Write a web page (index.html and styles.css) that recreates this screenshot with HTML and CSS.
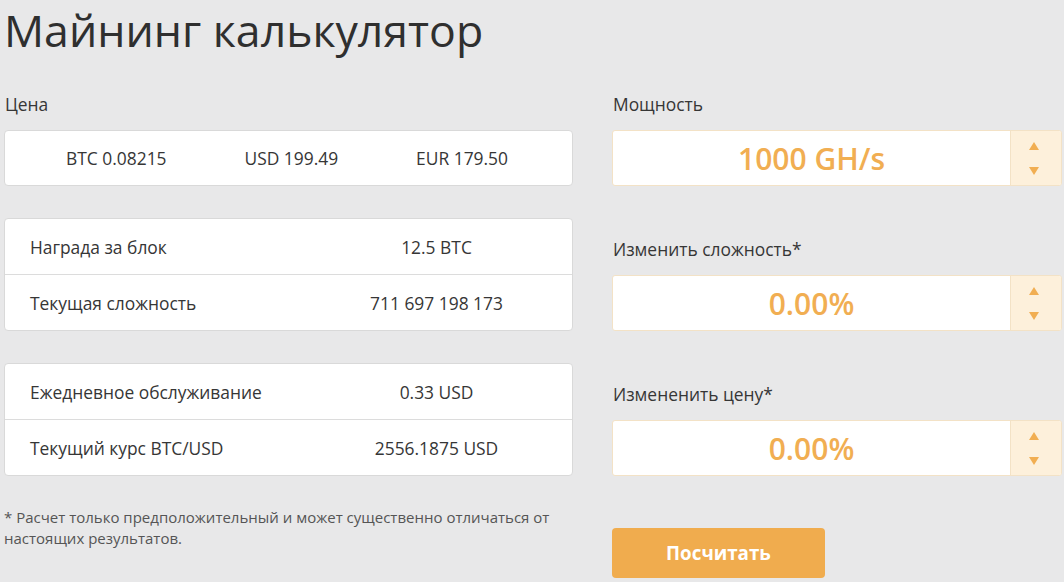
FILE: index.html
```html
<!DOCTYPE html>
<html lang="ru">
<head>
<meta charset="utf-8">
<title>Майнинг калькулятор</title>
<link rel="stylesheet" href="styles.css">
</head>
<body>
<div class="page">
  <h1 class="title">Майнинг калькулятор</h1>
  <div class="columns">
    <div class="left">
      <div class="label">Цена</div>
      <div class="box prices">
        <span>BTC 0.08215</span>
        <span>USD 199.49</span>
        <span>EUR 179.50</span>
      </div>
      <div class="box table">
        <div class="row"><span class="k">Награда за блок</span><span class="v">12.5 BTC</span></div>
        <div class="row"><span class="k">Текущая сложность</span><span class="v">711 697 198 173</span></div>
      </div>
      <div class="box table">
        <div class="row"><span class="k">Ежедневное обслуживание</span><span class="v">0.33 USD</span></div>
        <div class="row"><span class="k">Текущий курс BTC/USD</span><span class="v">2556.1875 USD</span></div>
      </div>
      <p class="note">* Расчет только предположительный и может существенно отличаться от настоящих результатов.</p>
    </div>
    <div class="right">
      <div class="label">Мощность</div>
      <div class="spin">
        <div class="spin-value">1000 GH/s</div>
        <div class="spin-btns"><span class="up"></span><span class="down"></span></div>
      </div>
      <div class="label">Изменить сложность*</div>
      <div class="spin">
        <div class="spin-value">0.00%</div>
        <div class="spin-btns"><span class="up"></span><span class="down"></span></div>
      </div>
      <div class="label">Измененить цену*</div>
      <div class="spin">
        <div class="spin-value">0.00%</div>
        <div class="spin-btns"><span class="up"></span><span class="down"></span></div>
      </div>
      <button class="btn">Посчитать</button>
    </div>
  </div>
</div>
</body>
</html>
```

FILE: styles.css
```css
html, body {
  margin: 0;
  padding: 0;
  background: #e8e8e9;
}
body {
  font-family: "Open Sans", "Liberation Sans", sans-serif;
  color: #333;
  width: 1064px;
  height: 582px;
  overflow: hidden;
}
.page {
  padding: 0 2px 0 4px;
}
.title {
  margin: 2px 0 0 0;
  font-size: 44.6px;
  font-weight: 400;
  line-height: 56px;
  color: #2f2f2f;
}
.columns {
  display: grid;
  grid-template-columns: 569px 450px;
  column-gap: 39px;
  margin-top: 35px;
}
.label {
  font-size: 17.4px;
  line-height: 22px;
  color: #363636;
  margin-bottom: 15px;
  margin-left: 1px;
}
.box {
  background: #fff;
  border: 1px solid #d9d9d9;
  border-radius: 4px;
  box-sizing: border-box;
  font-size: 17.4px;
  color: #363636;
}
.prices {
  height: 56px;
  display: flex;
  align-items: center;
  justify-content: space-between;
  padding: 0 64px 0 61px;
}
.table {
  margin-top: 32px;
}
.row {
  display: grid;
  grid-template-columns: 296px 1fr;
  align-items: center;
  height: 55px;
}
.row + .row {
  border-top: 1px solid #dcdcdc;
}
.k {
  padding-left: 25px;
}
.v {
  text-align: center;
}
.note {
  margin: 31px 0 0 0;
  font-size: 15px;
  line-height: 21px;
  color: #555;
  width: 565px;
}
.spin {
  display: flex;
  height: 56px;
  box-sizing: border-box;
  border: 1px solid #f3e2c6;
  border-radius: 3px;
  background: #fff;
  overflow: hidden;
  margin-bottom: 52px;
}
.spin-value {
  flex: 1;
  display: flex;
  align-items: center;
  justify-content: center;
  font-size: 30px;
  font-weight: 600;
  color: #f1ae52;
}
.spin-btns {
  width: 51px;
  padding-right: 4px;
  box-sizing: border-box;
  background: #fdf0db;
  border-left: 1px solid #f3e2c6;
  display: flex;
  flex-direction: column;
  align-items: center;
  justify-content: center;
  gap: 17px;
}
.up, .down {
  width: 0;
  height: 0;
  border-left: 5px solid transparent;
  border-right: 5px solid transparent;
}
.up {
  border-bottom: 8px solid #f1ae52;
}
.down {
  border-top: 8px solid #f1ae52;
}
.btn {
  display: block;
  width: 213px;
  height: 50px;
  margin: 0;
  border: none;
  border-radius: 4px;
  background: #f0ac4e;
  color: #fff;
  font-family: "Open Sans", "Liberation Sans", sans-serif;
  font-size: 18.8px;
  font-weight: 700;
  cursor: pointer;
}
```
